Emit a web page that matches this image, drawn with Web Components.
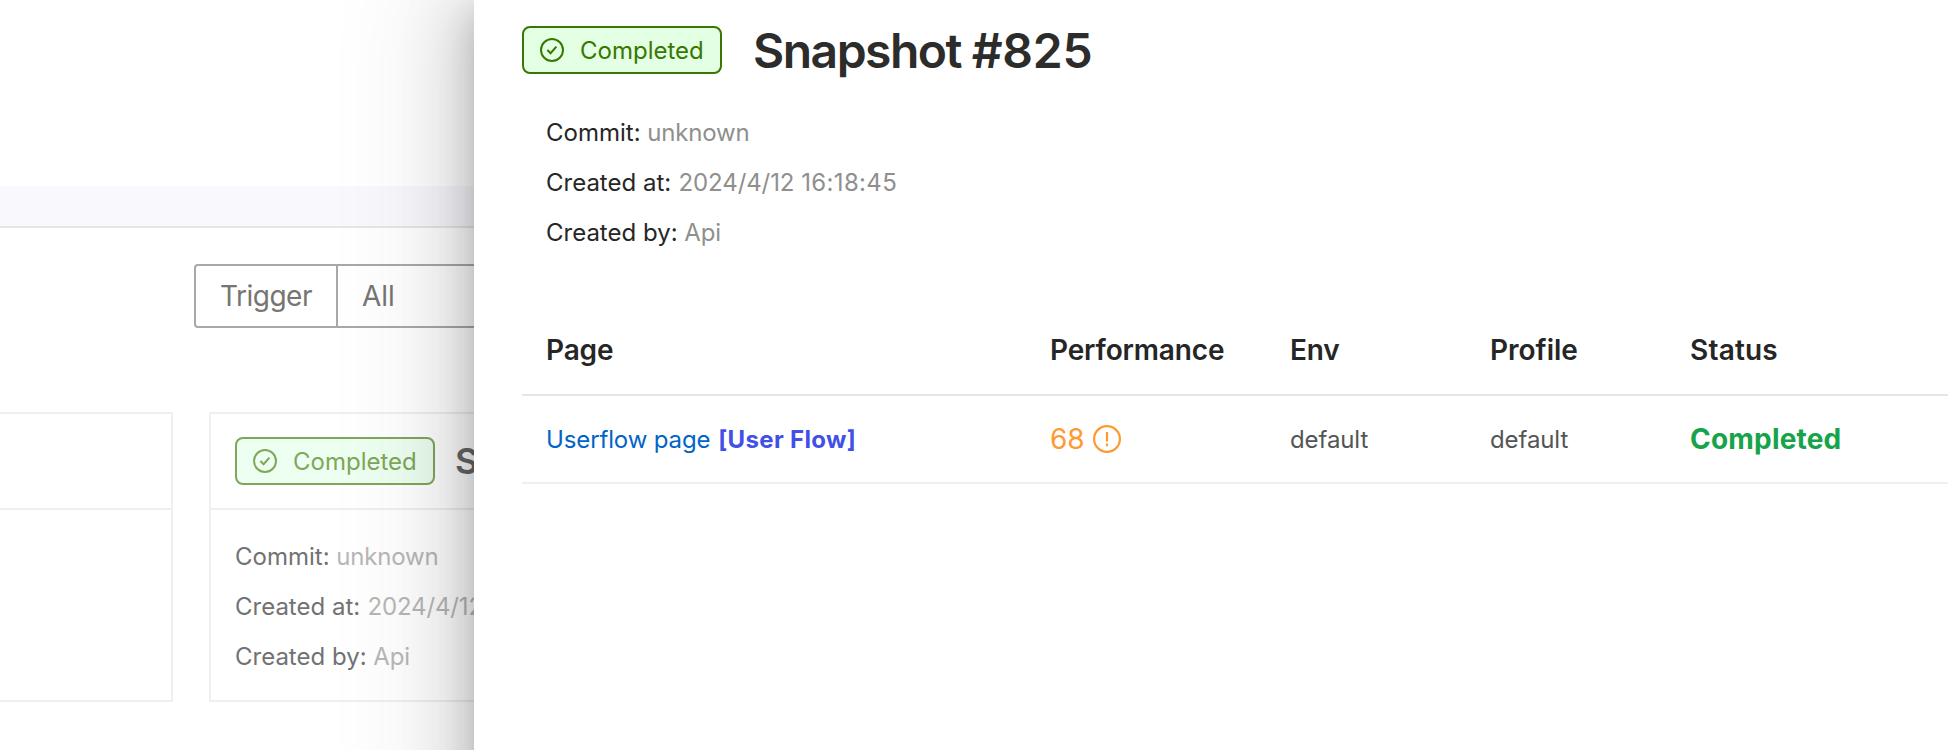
<!DOCTYPE html>
<html lang="en"><head><meta charset="utf-8"><title>Snapshot #825</title>
<style>
html,body{margin:0;height:100%;overflow:hidden;background:#fff}
body{font-family:Inter,"Liberation Sans",sans-serif}
</style></head><body>
<app-shell></app-shell>
<script>
const make=(name,html)=>customElements.define(name,class extends HTMLElement{
  constructor(){super();const t=document.createElement('template');t.innerHTML=html;
    this.attachShadow({mode:'open'}).append(t.content.cloneNode(true));}
});

make('status-badge',`<style>
:host{display:flex;align-items:center;box-sizing:border-box;width:200px;height:48px;padding-left:16px;gap:16px;border:2px solid var(--badge-line,#387800);border-radius:8px;background:var(--badge-fill,#e3ffe4);color:var(--badge-line,#387800);font-size:24px;font-weight:400;line-height:44px;flex:none}
svg{width:24px;height:24px;flex:none}
span{white-space:nowrap;padding-top:1px}
</style><svg viewBox="0 0 24 24" fill="none" stroke="currentColor" stroke-width="2"><circle cx="12" cy="12" r="11"/><path d="M7.4 12l3.2 3.2 5.8-6.6"/></svg><span><slot></slot></span>`);

make('meta-line',`<style>
:host{display:block;height:50px;line-height:50px;font-size:24px;white-space:nowrap;color:var(--meta-label,#262626)}
.v{color:var(--meta-value,#8f8f8d);letter-spacing:-.2px}
:host([numeric]) .v{letter-spacing:.05px;margin-left:.6px}
</style><slot name="label"></slot> <span class="v"><slot></slot></span>`);

make('filter-select',`<style>
:host{display:flex;box-sizing:border-box;width:420px;height:64px;border:2px solid #a9a9a4;border-radius:4px;font-size:28px;line-height:60px;color:#757575}
div{box-sizing:border-box;padding-left:24px}
.l{width:142px;border-right:2px solid #a9a9a4;letter-spacing:-.5px}
</style><div class="l"><slot name="label"></slot></div><div><slot></slot></div>`);

make('snapshot-card',`<style>
:host{display:block;box-sizing:border-box;border:2px solid #efefef;height:290px;flex:none;
 --badge-line:#7fa75a;--badge-fill:#edfff0;--meta-label:#727272;--meta-value:#b8b7b6}
header{box-sizing:border-box;height:96px;border-bottom:2px solid #efefef;display:flex;align-items:center;padding-left:24px;gap:20px;font-size:36px;font-weight:600;color:#686868;white-space:nowrap}
section{padding:22px 0 0 24px}
</style><header><slot name="head"></slot></header><section><slot></slot></section>`);

make('list-page',`<style>
:host{display:block;width:1000px;height:750px;overflow:hidden}
.band{height:40px;margin-top:186px;background:#f8f8fd;border-bottom:2px solid #e6e6e6}
.filters{padding:36px 0 0 194px}
.cards{display:flex;gap:36px;margin-top:84px}
.a{width:173px;border-left:0}
.b{width:560px}
.date{letter-spacing:-.15px}
</style><div class="band"></div><div class="filters"><filter-select><span slot="label">Trigger</span>All</filter-select></div>
<div class="cards"><snapshot-card class="a"></snapshot-card>
<snapshot-card class="b"><status-badge slot="head">Completed</status-badge><span slot="head">S</span>
<meta-line><span slot="label">Commit:</span>unknown</meta-line>
<meta-line numeric><span slot="label">Created at:</span><span class="date">2024/4/12</span></meta-line>
<meta-line><span slot="label">Created by:</span>Api</meta-line></snapshot-card></div>`);

make('page-table',`<style>
:host{display:block;--cols:504px 240px 200px 200px 1fr}
.r{display:grid;grid-template-columns:var(--cols);padding-left:24px;align-items:center;white-space:nowrap;box-sizing:border-box}
.head{height:90px;font-size:28px;font-weight:600;color:#262626;border-bottom:2px solid #e6e6e6}
.tight{letter-spacing:-.15px}
.loose{letter-spacing:.2px}
.row{height:88px;font-size:24px;color:#555;border-bottom:2px solid #efefef}
.plain{letter-spacing:-.1px}
.link{color:#0064c8;letter-spacing:-.13px}
.flow{color:#4150e6;font-weight:700;letter-spacing:.35px;margin-left:1px}
.perf{display:flex;align-items:center;gap:8px;font-size:28px;color:#ff9932}
svg{width:28px;height:28px}
.ok{font-size:28px;font-weight:700;color:#16a34a;letter-spacing:.2px}
</style>
<div class="r head"><div class="tight">Page</div><div class="tight">Performance</div><div class="tight">Env</div><div>Profile</div><div class="loose">Status</div></div>
<div class="r row"><div><span class="link">Userflow page</span> <span class="flow">[User Flow]</span></div>
<div class="perf"><span>68</span><svg viewBox="0 0 28 28" fill="none" stroke="currentColor" stroke-width="2.2"><circle cx="14" cy="14" r="12.9"/><path d="M14 7v9.5M14 18.6v2.6"/></svg></div>
<div class="plain">default</div><div class="plain">default</div><div class="ok">Completed</div></div>`);

make('snapshot-drawer',`<style>
:host{display:block;position:absolute;left:474px;top:0;right:0;height:1100px;background:#fff;box-sizing:border-box;padding-left:48px;
box-shadow:-12px 0 32px -16px rgba(0,0,0,.2),-18px 0 56px 0 rgba(0,0,0,.12),-24px 0 96px 32px rgba(0,0,0,.07)}
header{display:flex;align-items:center;gap:31px;padding-top:22px;height:56px}
h1{margin:0;font-size:48px;line-height:56px;font-weight:600;color:#2c2c2a;letter-spacing:-1.5px;white-space:nowrap;padding-top:2px}
.num{letter-spacing:-.2px}
.date{letter-spacing:-.1px}
.time{letter-spacing:.35px}
.meta{padding:30px 0 0 24px}
page-table{margin-top:48px}
</style><header><status-badge>Completed</status-badge><h1>Snapshot <span class="num">#825</span></h1></header>
<div class="meta"><meta-line><span slot="label">Commit:</span>unknown</meta-line>
<meta-line numeric><span slot="label">Created at:</span><span class="date">2024/4/12</span> <span class="time">16:18:45</span></meta-line>
<meta-line><span slot="label">Created by:</span>Api</meta-line></div><page-table></page-table>`);

make('app-shell',`<style>:host{display:block;position:relative;width:100%;height:750px;overflow:hidden;background:#fff}</style>
<list-page></list-page><snapshot-drawer></snapshot-drawer>`);
</script></body></html>
